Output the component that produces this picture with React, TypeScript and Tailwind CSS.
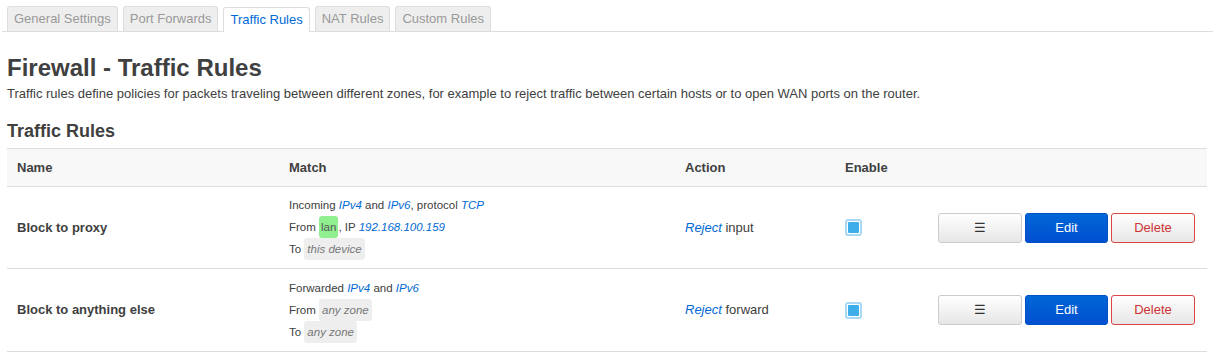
import React from "react";

const font = { fontFamily: '"Liberation Sans", Arial, sans-serif' };

function Tab({ label, active }: { label: string; active?: boolean }) {
  return (
    <div
      className={
        "h-[25px] flex items-center text-[13px] rounded-t-[3px] border border-b-0 mr-[5px] px-[6px] " +
        (active
          ? "bg-white border-[#ddd] text-[#0069d6] relative top-[1px]"
          : "bg-[#eee] border-[#ddd] text-[#999]")
      }
    >
      {label}
    </div>
  );
}

function Badge({ children, green }: { children: React.ReactNode; green?: boolean }) {
  return (
    <span
      className={
        "inline-block leading-[22px] rounded-[3px] " +
        (green ? "bg-[#90f090] text-[#555] px-[2px]" : "bg-[#eee] text-[#777] italic px-[3px]")
      }
    >
      {children}
    </span>
  );
}

function Link({ children }: { children: React.ReactNode }) {
  return <em className="text-[#0069d6]">{children}</em>;
}

function Checkbox() {
  return (
    <div className="w-[17px] h-[17px] rounded-[3px] border-2 border-[#a8d8f4] bg-white flex items-center justify-center">
      <div className="w-[11px] h-[11px] rounded-[1px] bg-[#3daee9]" />
    </div>
  );
}

function Buttons() {
  return (
    <div className="flex gap-[3px]">
      <button className="w-[84px] h-[30px] rounded-[3px] border border-[#ccc] bg-gradient-to-b from-white to-[#e6e6e6] text-[#333] text-[13px]">
        ☰
      </button>
      <button className="w-[83px] h-[30px] rounded-[3px] border border-[#0050c8] bg-gradient-to-b from-[#0066d6] to-[#004fd0] text-white text-[13px]">
        Edit
      </button>
      <button className="w-[84px] h-[30px] rounded-[3px] border border-[#d44] bg-gradient-to-b from-white to-[#e6e6e6] text-[#c33] text-[13px]">
        Delete
      </button>
    </div>
  );
}

export default function App() {
  return (
    <div style={font} className="bg-white w-[1225px] h-[363px] text-[#404040] overflow-hidden">
      <div className="pt-[6px] pl-[2px] pr-[12px]">
        <div className="flex pl-[5px] border-b border-[#ddd]">
          <Tab label="General Settings" />
          <Tab label="Port Forwards" />
          <Tab label="Traffic Rules" active />
          <Tab label="NAT Rules" />
          <Tab label="Custom Rules" />
        </div>
      </div>
      <div className="px-[7px]">
        <h2 className="text-[24px] font-bold leading-[30px] mt-[21px] text-[#404040]">
          Firewall - Traffic Rules
        </h2>
        <p className="text-[13px] leading-[16px] mt-[3px] text-[#404040]">
          Traffic rules define policies for packets traveling between different zones, for example to reject traffic between certain hosts or to open WAN ports on the router.
        </p>
        <h3 className="text-[18px] font-bold leading-[22px] mt-[18px] text-[#404040]">Traffic Rules</h3>
        <table className="mt-[6px] w-[1200px] border-collapse text-[13px]">
          <thead>
            <tr className="bg-[#f8f8f8] border-t border-b border-[#ddd] h-[38px]">
              <th className="text-left font-bold pl-[10px] w-[272px]">Name</th>
              <th className="text-left font-bold pl-[10px] w-[396px]">Match</th>
              <th className="text-left font-bold pl-[10px] w-[160px]">Action</th>
              <th className="text-left font-bold pl-[10px] w-[93px]">Enable</th>
              <th></th>
            </tr>
          </thead>
          <tbody>
            <tr className="border-b border-[#ddd] h-[82px]">
              <td className="pl-[10px] font-bold">Block to proxy</td>
              <td className="pl-[10px] text-[11.5px] leading-[21px]">
                <div>
                  Incoming <Link>IPv4</Link> and <Link>IPv6</Link>, protocol <Link>TCP</Link>
                </div>
                <div>
                  From <Badge green>lan</Badge>, IP <Link>192.168.100.159</Link>
                </div>
                <div>
                  To <Badge>this device</Badge>
                </div>
              </td>
              <td className="pl-[10px]">
                <Link>Reject</Link> input
              </td>
              <td className="pl-[10px]">
                <Checkbox />
              </td>
              <td className="pl-[10px]">
                <Buttons />
              </td>
            </tr>
            <tr className="border-b border-[#ddd] h-[83px]">
              <td className="pl-[10px] font-bold">Block to anything else</td>
              <td className="pl-[10px] text-[11.5px] leading-[21px]">
                <div>
                  Forwarded <Link>IPv4</Link> and <Link>IPv6</Link>
                </div>
                <div>
                  From <Badge>any zone</Badge>
                </div>
                <div>
                  To <Badge>any zone</Badge>
                </div>
              </td>
              <td className="pl-[10px]">
                <Link>Reject</Link> forward
              </td>
              <td className="pl-[10px]">
                <Checkbox />
              </td>
              <td className="pl-[10px]">
                <Buttons />
              </td>
            </tr>
          </tbody>
        </table>
      </div>
    </div>
  );
}
